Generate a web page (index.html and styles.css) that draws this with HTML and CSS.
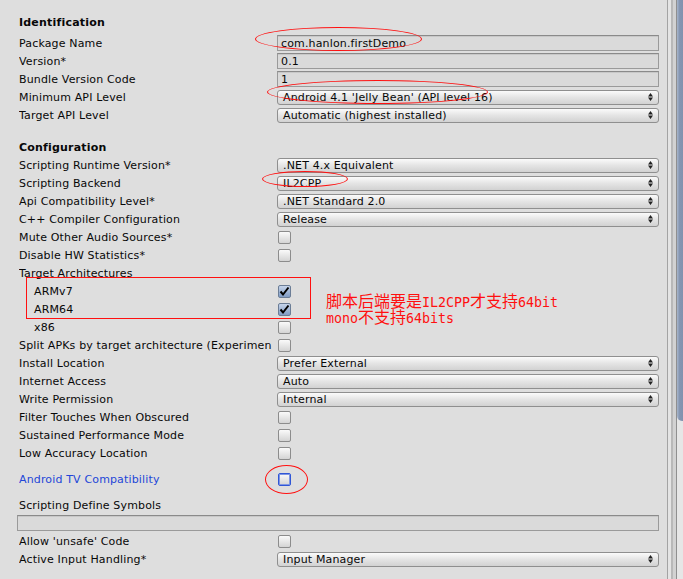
FILE: index.html
```html
<!DOCTYPE html>
<html>
<head>
<meta charset="utf-8">
<link rel="stylesheet" href="styles.css">
</head>
<body>
<div class="window">
  <div class="panel">
    <div class="title first">Identification</div>
    <div class="row"><span class="label">Package Name</span><div class="text">com.hanlon.firstDemo</div></div>
    <div class="row"><span class="label">Version*</span><div class="text">0.1</div></div>
    <div class="row"><span class="label">Bundle Version Code</span><div class="text">1</div></div>
    <div class="row"><span class="label">Minimum API Level</span><div class="drop"><span>Android 4.1 'Jelly Bean' (API level 16)</span><svg class="arr" width="5" height="8" viewBox="0 0 5 8"><path d="M0 3.5L2.5 0L5 3.5Z M0 4.5L2.5 8L5 4.5Z"/></svg></div></div>
    <div class="row"><span class="label">Target API Level</span><div class="drop"><span>Automatic (highest installed)</span><svg class="arr" width="5" height="8" viewBox="0 0 5 8"><path d="M0 3.5L2.5 0L5 3.5Z M0 4.5L2.5 8L5 4.5Z"/></svg></div></div>

    <div class="title second">Configuration</div>
    <div class="row"><span class="label">Scripting Runtime Version*</span><div class="drop"><span>.NET 4.x Equivalent</span><svg class="arr" width="5" height="8" viewBox="0 0 5 8"><path d="M0 3.5L2.5 0L5 3.5Z M0 4.5L2.5 8L5 4.5Z"/></svg></div></div>
    <div class="row"><span class="label">Scripting Backend</span><div class="drop"><span>IL2CPP</span><svg class="arr" width="5" height="8" viewBox="0 0 5 8"><path d="M0 3.5L2.5 0L5 3.5Z M0 4.5L2.5 8L5 4.5Z"/></svg></div></div>
    <div class="row"><span class="label">Api Compatibility Level*</span><div class="drop"><span>.NET Standard 2.0</span><svg class="arr" width="5" height="8" viewBox="0 0 5 8"><path d="M0 3.5L2.5 0L5 3.5Z M0 4.5L2.5 8L5 4.5Z"/></svg></div></div>
    <div class="row"><span class="label">C++ Compiler Configuration</span><div class="drop"><span>Release</span><svg class="arr" width="5" height="8" viewBox="0 0 5 8"><path d="M0 3.5L2.5 0L5 3.5Z M0 4.5L2.5 8L5 4.5Z"/></svg></div></div>
    <div class="row"><span class="label">Mute Other Audio Sources*</span><div class="check"></div></div>
    <div class="row"><span class="label">Disable HW Statistics*</span><div class="check"></div></div>
    <div class="row"><span class="label">Target Architectures</span></div>
    <div class="row"><span class="label sub">ARMv7</span><div class="check on"><svg width="11" height="11" viewBox="0 0 11 11"><path d="M1.5 5.5L4 8.5L9.5 1.5" fill="none" stroke="#000" stroke-width="2"/></svg></div></div>
    <div class="row"><span class="label sub">ARM64</span><div class="check on"><svg width="11" height="11" viewBox="0 0 11 11"><path d="M1.5 5.5L4 8.5L9.5 1.5" fill="none" stroke="#000" stroke-width="2"/></svg></div></div>
    <div class="row"><span class="label sub">x86</span><div class="check"></div></div>
    <div class="row"><span class="label">Split APKs by target architecture (Experimen</span><div class="check"></div></div>
    <div class="row"><span class="label">Install Location</span><div class="drop"><span>Prefer External</span><svg class="arr" width="5" height="8" viewBox="0 0 5 8"><path d="M0 3.5L2.5 0L5 3.5Z M0 4.5L2.5 8L5 4.5Z"/></svg></div></div>
    <div class="row"><span class="label">Internet Access</span><div class="drop"><span>Auto</span><svg class="arr" width="5" height="8" viewBox="0 0 5 8"><path d="M0 3.5L2.5 0L5 3.5Z M0 4.5L2.5 8L5 4.5Z"/></svg></div></div>
    <div class="row"><span class="label">Write Permission</span><div class="drop"><span>Internal</span><svg class="arr" width="5" height="8" viewBox="0 0 5 8"><path d="M0 3.5L2.5 0L5 3.5Z M0 4.5L2.5 8L5 4.5Z"/></svg></div></div>
    <div class="row"><span class="label">Filter Touches When Obscured</span><div class="check"></div></div>
    <div class="row"><span class="label">Sustained Performance Mode</span><div class="check"></div></div>
    <div class="row"><span class="label">Low Accuracy Location</span><div class="check"></div></div>
    <div class="row spaced"><span class="label blue">Android TV Compatibility</span><div class="check focus"></div></div>
    <div class="row spaced"><span class="label">Scripting Define Symbols</span></div>
    <div class="row wide"><div class="text long"></div></div>
    <div class="row"><span class="label">Allow 'unsafe' Code</span><div class="check"></div></div>
    <div class="row"><span class="label">Active Input Handling*</span><div class="drop"><span>Input Manager</span><svg class="arr" width="5" height="8" viewBox="0 0 5 8"><path d="M0 3.5L2.5 0L5 3.5Z M0 4.5L2.5 8L5 4.5Z"/></svg></div></div>
  </div>
  <div class="scroll">
    <div class="sl l1"></div>
    <div class="sl l2"></div>
    <div class="sl l3"></div>
    <div class="sl l4"></div>
    <div class="sl l5"></div>
    <div class="track"><div class="thumb"></div></div>
  </div>

  <div class="mark ell e1"></div>
  <div class="mark ell e2"></div>
  <div class="mark ell e3"></div>
  <div class="mark rect"></div>
  <div class="mark ell e4"></div>
  <div class="note">
    <div class="nl">脚本后端要是<span class="lat">IL2CPP</span>才支持<span class="lat">64bit</span></div>
    <div class="nl"><span class="lat">mono</span>不支持<span class="lat">64bits</span></div>
  </div>
</div>
</body>
</html>
```

FILE: styles.css
```css
* { box-sizing: border-box; }
html, body { margin: 0; padding: 0; background: #dedede; }
body {
  font-family: "DejaVu Sans", "Noto Sans", sans-serif;
  font-size: 11px;
  color: #080808;
}
.window {
  position: relative;
  width: 683px;
  height: 579px;
  overflow: hidden;
  display: flex;
}
.panel {
  width: 667px;
  padding: 13px 8px 0 19px;
  display: flex;
  flex-direction: column;
}
.title {
  height: 18px;
  line-height: 18px;
  padding-top: 1px;
  font-weight: bold;
  letter-spacing: 0.2px;
}
.title.first { margin-bottom: 3px; }
.title.second { margin-top: 14px; }
.row {
  height: 18px;
  display: flex;
  align-items: center;
}
.row.spaced { margin-top: 8px; }
.label {
  width: 258px;
  height: 18px;
  flex: none;
  white-space: nowrap;
  overflow: hidden;
  letter-spacing: 0.15px;
  line-height: 18px;
  padding-top: 1px;
}
.label.sub { padding-left: 15px; }
.label.blue { color: #2346d8; }
.text {
  width: 382px;
  height: 16px;
  border: 1px solid #9a9a9a;
  border-top-color: #8a8a8a;
  background: #dadada;
  box-shadow: inset 0 1px 0 #c8c8c8;
  padding-left: 3px;
  line-height: 15px;
  letter-spacing: 0.15px;
}
.text.long {
  width: 642px;
  margin-left: -2px;
  height: 16px;
}
.drop {
  width: 382px;
  height: 15px;
  border: 1px solid #8f8f8f;
  border-radius: 3px;
  background: linear-gradient(#fbfbfb, #e6e6e6 45%, #d2d2d2);
  padding-left: 5px;
  line-height: 13px;
  display: flex;
  align-items: center;
  justify-content: space-between;
  letter-spacing: 0.15px;
}
.arr { margin-right: 5px; fill: #222; }
.check {
  width: 13px;
  height: 13px;
  margin-left: 1px;
  border: 1px solid #8c8c8c;
  border-radius: 2px;
  background: linear-gradient(#fafafa, #d4d4d4);
  display: flex;
  align-items: center;
  justify-content: center;
}
.check.on {
  background: linear-gradient(#c6d4ea, #7f9bc4);
  border-color: #6b7d96;
}
.check.focus {
  border: 1px solid #2f56d6;
  box-shadow: inset 0 0 0 1px #7f96e3;
}
.scroll {
  width: 16px;
  display: flex;
  height: 579px;
}
.sl { height: 100%; }
.l1 { width: 1px; background: #a3a3a3; }
.l2 { width: 3px; background: #e4e4e4; }
.l3 { width: 2px; background: #b8b8b8; }
.l4 { width: 3px; background: #d2d2d2; }
.l5 { width: 1px; background: #8f8f8f; }
.track {
  width: 6px;
  height: 100%;
  background: #e6e6e6;
}
.thumb {
  height: 421px;
  background: linear-gradient(90deg, #a8b6cc, #8596b2 40%, #8192ae);
  border-radius: 0 0 0 5px;
}
.mark {
  position: absolute;
  border: 1px solid #ff1010;
  pointer-events: none;
}
.ell { border-radius: 50%; }
.e1 { left: 255px; top: 27px; width: 167px; height: 24px; }
.e2 { left: 267px; top: 80px; width: 221px; height: 24px; }
.e3 { left: 262px; top: 171px; width: 86px; height: 16px; }
.e4 { left: 265px; top: 465px; width: 43px; height: 29px; }
.rect { left: 26px; top: 277px; width: 285px; height: 42px; }
.note {
  position: absolute;
  left: 326px;
  top: 292px;
  color: #ff1010;
  font-family: "Noto Sans CJK SC", sans-serif;
  font-size: 16px;
  white-space: nowrap;
}
.nl {
  height: 16px;
  line-height: 16px;
}
.lat {
  font-family: "DejaVu Sans Mono", monospace;
  font-size: 13.3px;
  line-height: 16px;
}
```
